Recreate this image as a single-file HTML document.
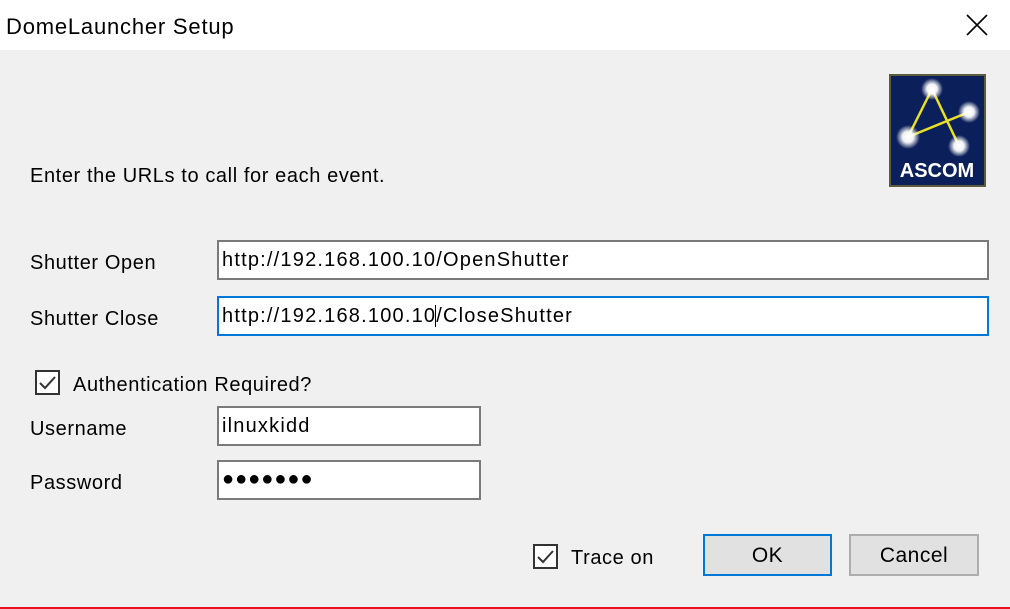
<!DOCTYPE html>
<html><head><meta charset="utf-8"><style>
*{margin:0;padding:0;box-sizing:border-box}
body{width:1010px;height:609px;background:#f0f0f0;font-family:"Liberation Sans",sans-serif;color:#000;position:relative;overflow:hidden}
.t{position:absolute;white-space:nowrap;font-size:20px;letter-spacing:0.6px}
.bar{position:absolute;left:0;top:0;width:1010px;height:50px;background:#fff}
.in{position:absolute;background:#fff;border:2px solid #7a7a7a;font-size:20px;padding:7px 0 0 3px;letter-spacing:1.2px;white-space:nowrap}
.cb{position:absolute;width:25px;height:25px;border:2px solid #333;background:#fff}
.btn{position:absolute;background:#e1e1e1;border:2px solid #adadad;font-size:21px;text-align:center;padding-top:8px;letter-spacing:0.5px}
</style></head><body>
<div class="bar"></div>
<div class="t" style="left:6px;top:14px;font-size:22px;letter-spacing:0.8px">DomeLauncher Setup</div>
<svg style="position:absolute;left:966px;top:14px" width="22" height="22" viewBox="0 0 22 22"><path d="M1 1L21 21M21 1L1 21" stroke="#000" stroke-width="1.6"/></svg>

<svg style="position:absolute;left:889px;top:74px" width="97" height="113" viewBox="0 0 97 113">
<defs><radialGradient id="g"><stop offset="0" stop-color="#fff"/><stop offset="0.45" stop-color="#fff" stop-opacity="0.95"/><stop offset="1" stop-color="#fff" stop-opacity="0"/></radialGradient></defs>
<rect x="1" y="1" width="95" height="111" fill="#0b1f5a" stroke="#5c5c3c" stroke-width="2"/>
<path d="M43 15L19 63M43 15L70 72M19 63L80 38" stroke="#e8e020" stroke-width="2.5" fill="none"/>
<circle cx="43" cy="15" r="11" fill="url(#g)"/><circle cx="80" cy="38" r="11" fill="url(#g)"/>
<circle cx="19" cy="63" r="12" fill="url(#g)"/><circle cx="70" cy="72" r="11" fill="url(#g)"/>
<text x="48" y="103" text-anchor="middle" fill="#fff" font-family="Liberation Sans" font-weight="bold" font-size="20">ASCOM</text>
</svg>

<div class="t" style="left:30px;top:165px">Enter the URLs to call for each event.</div>
<div class="t" style="left:30px;top:252px">Shutter Open</div>
<div class="in" style="left:217px;top:240px;width:772px;height:40px">http://192.168.100.10/OpenShutter</div>
<div class="t" style="left:30px;top:308px">Shutter Close</div>
<div class="in" style="left:217px;top:296px;width:772px;height:40px;border-color:#0078d7">http://192.168.100.10<span style="border-left:1.5px solid #000;margin-left:-1px"></span>/CloseShutter</div>

<div class="cb" style="left:35px;top:370px"></div>
<svg style="position:absolute;left:35px;top:370px" width="25" height="25"><path d="M5 13L10 18L20 7" stroke="#333" stroke-width="2" fill="none"/></svg>
<div class="t" style="left:73px;top:374px">Authentication Required?</div>

<div class="t" style="left:30px;top:418px">Username</div>
<div class="in" style="left:217px;top:406px;width:264px;height:40px">ilnuxkidd</div>
<div class="t" style="left:30px;top:472px">Password</div>
<div class="in" style="left:217px;top:460px;width:264px;height:40px;letter-spacing:1px;padding-top:6px">●●●●●●●</div>

<div class="cb" style="left:533px;top:544px"></div>
<svg style="position:absolute;left:533px;top:544px" width="25" height="25"><path d="M5 13L10 18L20 7" stroke="#333" stroke-width="2" fill="none"/></svg>
<div class="t" style="left:571px;top:547px">Trace on</div>
<div class="btn" style="left:703px;top:534px;width:129px;height:42px;border-color:#0078d7">OK</div>
<div class="btn" style="left:849px;top:534px;width:130px;height:42px">Cancel</div>
<div style="position:absolute;left:0;top:607px;width:1010px;height:2px;background:#e81123"></div>
</body></html>
